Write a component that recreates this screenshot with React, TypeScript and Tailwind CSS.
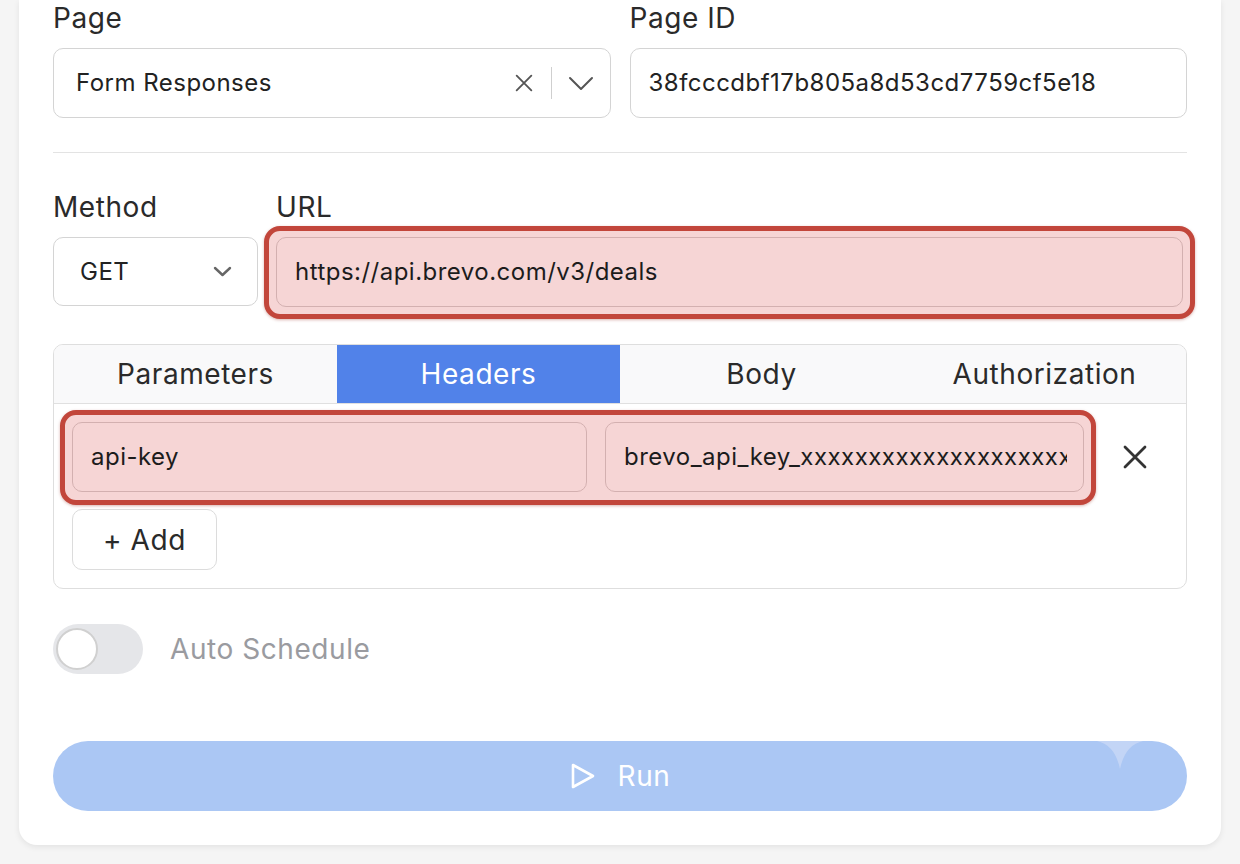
import React from "react";

function XIcon({ className = "", size = 24, stroke = 2 }: { className?: string; size?: number; stroke?: number }) {
  return (
    <svg width={size} height={size} viewBox="0 0 24 24" fill="none" stroke="currentColor" strokeWidth={stroke} strokeLinecap="round" className={className}>
      <path d="M4 4 L20 20 M20 4 L4 20" />
    </svg>
  );
}

function Chevron({ className = "", w = 24, h = 14, stroke = 2 }: { className?: string; w?: number; h?: number; stroke?: number }) {
  return (
    <svg width={w} height={h} viewBox={`0 0 ${w} ${h}`} fill="none" stroke="currentColor" strokeWidth={stroke} strokeLinecap="round" strokeLinejoin="round" className={className}>
      <path d={`M2 2 L${w / 2} ${h - 2} L${w - 2} 2`} />
    </svg>
  );
}

export default function App() {
  return (
    <div className="w-[1240px] h-[864px] overflow-hidden bg-[#f5f5f5] font-['Inter','Noto_Sans',sans-serif] text-[#222]">
      <div className="ml-[19px] w-[1202px] bg-white rounded-b-[18px] shadow-[0_2px_6px_rgba(0,0,0,0.08)] px-[34px] pt-[2px] pb-[34px]">
        {/* Page / Page ID */}
        <div className="grid grid-cols-2 gap-x-[19px]">
          <div className="flex flex-col">
            <div className="text-[28px] leading-[32px] tracking-[0.02em] text-[#2a2a2a]">Page</div>
            <div className="mt-[14px] h-[70px] rounded-[10px] border border-[#d4d4d4] flex items-center pl-[22px] pr-[16px]">
              <span className="flex-1 text-[24px] tracking-[0.02em] text-[#222]">Form Responses</span>
              <XIcon size={22} stroke={2} className="text-[#555] mr-[4px]" />
              <div className="ml-[12px] mr-[16px] w-px h-[32px] bg-[#cfcfcf]" />
              <Chevron w={26} h={15} stroke={2} className="text-[#555]" />
            </div>
          </div>
          <div className="flex flex-col">
            <div className="text-[28px] leading-[32px] tracking-[0.02em] text-[#2a2a2a]">Page ID</div>
            <div className="mt-[14px] h-[70px] rounded-[10px] border border-[#d4d4d4] flex items-center px-[18px]">
              <span className="text-[24px] tracking-[0.02em] text-[#222]">38fcccdbf17b805a8d53cd7759cf5e18</span>
            </div>
          </div>
        </div>

        <div className="mt-[34px] h-px bg-[#e3e3e3]" />

        {/* Method / URL */}
        <div className="mt-[38px] flex gap-[18px]">
          <div className="w-[205px] flex flex-col">
            <div className="text-[28px] leading-[32px] tracking-[0.02em] text-[#2a2a2a]">Method</div>
            <div className="mt-[14px] h-[69px] rounded-[10px] border border-[#d4d4d4] flex items-center pl-[26px] pr-[25px]">
              <span className="flex-1 text-[24px] tracking-[0.02em] text-[#222]">GET</span>
              <Chevron w={19} h={11} stroke={2.4} className="text-[#666]" />
            </div>
          </div>
          <div className="flex-1 flex flex-col mr-[4px]">
            <div className="text-[28px] leading-[32px] tracking-[0.02em] text-[#2a2a2a]">URL</div>
            <div className="relative mt-[14px]">
              <div className="absolute -inset-x-[12px] -top-[11px] -bottom-[12px] rounded-[16px] border-[5px] border-[#c2463b] bg-[#f6d5d5] shadow-[0_1px_3px_rgba(150,40,30,0.35)]" />
              <div className="relative h-[70px] rounded-[10px] border border-[#d3b0b0] bg-[#f6d5d5] flex items-center px-[18px]">
                <span className="text-[24px] tracking-[0.02em] text-[#1c1c1c]">https://api.brevo.com/v3/deals</span>
              </div>
            </div>
          </div>
        </div>

        {/* Tabs */}
        <div className="mt-[37px] rounded-[10px] border border-[#dedede] overflow-hidden">
          <div className="grid grid-cols-4 h-[59px] bg-[#f9f9fa] border-b border-[#e0e0e0] text-[28px] tracking-[0.02em]">
            <div className="flex items-center justify-center text-[#2a2a2a]">Parameters</div>
            <div className="flex items-center justify-center bg-[#5182e9] text-white">Headers</div>
            <div className="flex items-center justify-center text-[#2a2a2a]">Body</div>
            <div className="flex items-center justify-center text-[#2a2a2a]">Authorization</div>
          </div>
          <div className="px-[18px] pt-[18px] pb-[18px]">
            <div className="flex items-center">
              <div className="relative flex-1 flex gap-[18px]">
                <div className="absolute -inset-x-[12px] -top-[12px] -bottom-[13px] rounded-[16px] border-[5px] border-[#c2463b] bg-[#f6d5d5] shadow-[0_1px_3px_rgba(150,40,30,0.35)]" />
                <div className="relative flex-1 h-[70px] rounded-[10px] border border-[#d3b0b0] bg-[#f6d5d5] flex items-center px-[18px]">
                  <span className="text-[24px] tracking-[0.02em] text-[#1c1c1c]">api-key</span>
                </div>
                <div className="relative w-[479px] h-[70px] rounded-[10px] border border-[#d3b0b0] bg-[#f6d5d5] flex items-center pl-[18px] pr-[16px] overflow-hidden">
                  <span className="text-[24px] tracking-[0.02em] text-[#1c1c1c] whitespace-nowrap overflow-hidden">brevo_api_key_xxxxxxxxxxxxxxxxxxxxxxxxxx</span>
                </div>
              </div>
              <div className="ml-[18px] w-[66px] flex justify-center">
                <XIcon size={30} stroke={2.2} className="text-[#333]" />
              </div>
            </div>
            <div className="mt-[17px] w-[145px] h-[61px] rounded-[10px] border border-[#dcdcdc] flex items-center justify-center text-[28px] tracking-[0.02em] text-[#2a2a2a]">
              + Add
            </div>
          </div>
        </div>

        {/* Toggle */}
        <div className="mt-[35px] flex items-center gap-[27px]">
          <div className="w-[90px] h-[50px] rounded-full bg-[#e5e6e9] flex items-center pl-[3px]">
            <div className="w-[42px] h-[42px] rounded-full bg-white border-2 border-[#d0d0d0]" />
          </div>
          <span className="text-[28px] tracking-[0.02em] text-[#9a9ba0]">Auto Schedule</span>
        </div>

        {/* Run */}
        <div className="relative mt-[67px] h-[70px] rounded-full bg-[#abc7f4] flex items-center justify-center gap-[22px] text-white">
          <svg width="26" height="28" viewBox="0 0 26 28" fill="none" stroke="currentColor" strokeWidth="2.6" strokeLinejoin="round">
            <path d="M3 3 L23 14 L3 25 Z" />
          </svg>
          <span className="text-[28px] tracking-[0.02em]">Run</span>
          <svg width="50" height="30" viewBox="0 0 50 30" className="absolute left-[1042px] top-0">
            <path d="M2 0 Q20 4 25 28 Q30 4 48 0 Z" fill="#c3d5f6" />
          </svg>
        </div>
      </div>
    </div>
  );
}
